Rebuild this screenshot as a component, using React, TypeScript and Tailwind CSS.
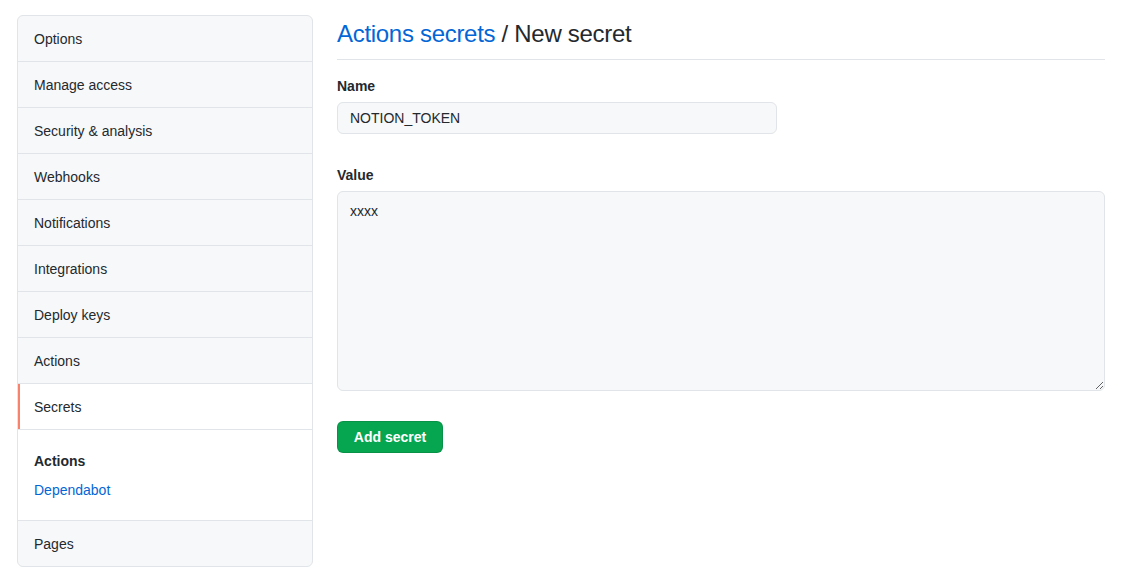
import React from 'react'

const items = [
  'Options',
  'Manage access',
  'Security & analysis',
  'Webhooks',
  'Notifications',
  'Integrations',
  'Deploy keys',
  'Actions',
]

export default function App() {
  return (
    <div
      className="flex gap-6 bg-white pl-[17px] pr-[17px] pt-[15px] text-[#24292e] h-[577px] overflow-hidden"
      style={{ fontFamily: '"Liberation Sans", Arial, sans-serif' }}
    >
      <nav className="w-[296px] shrink-0 self-start rounded-md border border-[#e1e4e8] bg-[#f6f8fa] overflow-hidden">
        {items.map((label, i) => (
          <div
            key={label}
            className={i > 0 ? 'h-[46px] flex items-center px-4 text-sm border-t border-[#e1e4e8]' : 'h-[45px] flex items-center px-4 text-sm'}
          >
            {label}
          </div>
        ))}
        <div className="h-[46px] flex items-center px-4 text-sm border-t border-[#e1e4e8] bg-white relative">
          <span className="absolute left-0 top-0 bottom-0 w-[2px] bg-[#f9826c]" />
          Secrets
        </div>
        <div className="border-t border-[#e1e4e8] bg-white pt-[21px] pb-[19px] px-4 text-sm leading-[21px]">
          <div className="font-semibold">Actions</div>
          <div className="mt-2 text-[#0366d6]">Dependabot</div>
        </div>
        <div className="h-[46px] flex items-center px-4 text-sm border-t border-[#e1e4e8]">
          Pages
        </div>
      </nav>

      <main className="flex-1 min-w-0">
        <div className="border-b border-[#e1e4e8] pb-[7px] pt-[1px]">
          <h2 className="text-[24px] leading-[36px] font-normal tracking-[-0.3px]">
            <span className="text-[#0366d6]">Actions secrets</span> / New secret
          </h2>
        </div>

        <div className="mt-4">
          <label className="block text-sm font-semibold leading-[21px]">Name</label>
          <input
            readOnly
            value="NOTION_TOKEN"
            className="mt-[5px] block w-[440px] h-[32px] rounded-md border border-[#e1e4e8] bg-[#f6f8fa] px-3 text-sm text-[#24292e] outline-none"
          />
        </div>

        <div className="mt-[31px]">
          <label className="block text-sm font-semibold leading-[21px]">Value</label>
          <textarea
            readOnly
            value="xxxx"
            className="mt-[5px] block w-full h-[200px] rounded-md border border-[#e1e4e8] bg-[#f6f8fa] px-3 py-[9px] text-sm leading-[20px] text-[#24292e] outline-none"
          />
        </div>

        <button className="mt-[30px] h-[32px] w-[106px] rounded-md border border-[rgba(27,31,35,0.15)] bg-[#05a64f] text-sm font-semibold text-white">
          Add secret
        </button>
      </main>
    </div>
  )
}
